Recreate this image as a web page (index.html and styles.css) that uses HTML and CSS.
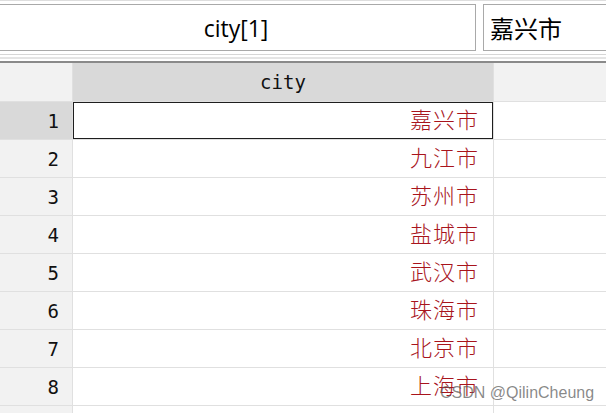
FILE: index.html
```html
<!DOCTYPE html>
<html lang="zh">
<head>
<meta charset="utf-8">
<title>Data Editor</title>
<link rel="stylesheet" href="styles.css">
</head>
<body>
<div class="app">
  <div class="topbar">
    <div class="field field-name">city[1]</div>
    <div class="field field-value">嘉兴市</div>
  </div>
  <div class="rules"></div>
  <div class="sheet">
    <div class="row head">
      <div class="num"></div>
      <div class="cell hcell">city</div>
      <div class="rest"></div>
    </div>
    <div class="row sel">
      <div class="num">1</div>
      <div class="cell"><span class="str">嘉兴市</span></div>
      <div class="rest"></div>
    </div>
    <div class="row">
      <div class="num">2</div>
      <div class="cell"><span class="str">九江市</span></div>
      <div class="rest"></div>
    </div>
    <div class="row">
      <div class="num">3</div>
      <div class="cell"><span class="str">苏州市</span></div>
      <div class="rest"></div>
    </div>
    <div class="row">
      <div class="num">4</div>
      <div class="cell"><span class="str">盐城市</span></div>
      <div class="rest"></div>
    </div>
    <div class="row">
      <div class="num">5</div>
      <div class="cell"><span class="str">武汉市</span></div>
      <div class="rest"></div>
    </div>
    <div class="row">
      <div class="num">6</div>
      <div class="cell"><span class="str">珠海市</span></div>
      <div class="rest"></div>
    </div>
    <div class="row">
      <div class="num">7</div>
      <div class="cell"><span class="str">北京市</span></div>
      <div class="rest"></div>
    </div>
    <div class="row">
      <div class="num">8</div>
      <div class="cell"><span class="str">上海市</span></div>
      <div class="rest"></div>
    </div>
    <div class="row">
      <div class="num"></div>
      <div class="cell"></div>
      <div class="rest"></div>
    </div>
  </div>
  <div class="watermark">CSDN @QilinCheung</div>
</div>
</body>
</html>
```

FILE: styles.css
```css
* { box-sizing: border-box; }

html, body {
  margin: 0;
  padding: 0;
  background: #ffffff;
  overflow: hidden;
}

.app {
  position: relative;
  width: 606px;
  height: 413px;
  overflow: hidden;
}

.topbar {
  display: flex;
  gap: 7px;
  border-top: 1px solid #dedede;
  padding-top: 3px;
  height: 51px;
}

.field {
  height: 47px;
  border: 1px solid #a9a9a9;
  background: #fff;
  display: flex;
  align-items: center;
  color: #000;
  flex: none;
}

.field-name {
  width: 480px;
  margin-left: -4px;
  justify-content: center;
  font-family: "Open Sans", "Noto Sans", sans-serif;
  font-size: 23px;
}

.field-value {
  width: 140px;
  padding-left: 6px;
  font-family: "Noto Sans CJK SC", sans-serif;
  font-size: 24px;
}

.rules {
  margin-top: 3px;
  height: 9px;
  background: linear-gradient(to bottom,
    #d6d6d6 0 1px,
    #ffffff 1px 3px,
    #e4e4e4 3px 5px,
    #ffffff 5px 7px,
    #8a8a8a 7px 9px);
}

.sheet {
  display: flex;
  flex-direction: column;
}

.row {
  display: flex;
  height: 38px;
  flex: none;
}

.row.head {
  height: 39px;
}

.num {
  width: 73px;
  flex: none;
  background: #f2f2f2;
  border-right: 1px solid #e0e0e0;
  border-bottom: 1px solid #e0e0e0;
  display: flex;
  align-items: center;
  justify-content: flex-end;
  padding-right: 13px;
  font-family: "DejaVu Sans Mono", monospace;
  font-size: 19px;
  color: #111;
}

.cell {
  width: 421px;
  flex: none;
  background: #fff;
  border-right: 1px solid #e0e0e0;
  border-bottom: 1px solid #e0e0e0;
  display: flex;
  align-items: center;
  justify-content: flex-end;
  padding-right: 14px;
}

.rest {
  flex: 1;
  background: #fff;
  border-bottom: 1px solid #e0e0e0;
}

.head .num {
  background: #f2f2f2;
}

.head .hcell {
  background: #d9d9d9;
  justify-content: center;
  padding-right: 0;
  font-family: "DejaVu Sans Mono", monospace;
  font-size: 19px;
  color: #111;
}

.head .rest {
  background: #f2f2f2;
}

.sel .num {
  background: #d9d9d9;
}

.sel .cell {
  box-shadow: inset 0 0 0 1px #1e1e1e;
}

.str {
  font-family: "Noto Sans CJK SC", sans-serif;
  font-size: 22px;
  font-weight: 300;
  letter-spacing: 1px;
  margin-bottom: 5px;
  color: #a8141c;
}

.watermark {
  position: absolute;
  left: 440px;
  top: 384px;
  font-family: "Liberation Sans", Arial, sans-serif;
  font-size: 16px;
  color: rgba(90, 90, 90, 0.72);
  white-space: nowrap;
}
```
